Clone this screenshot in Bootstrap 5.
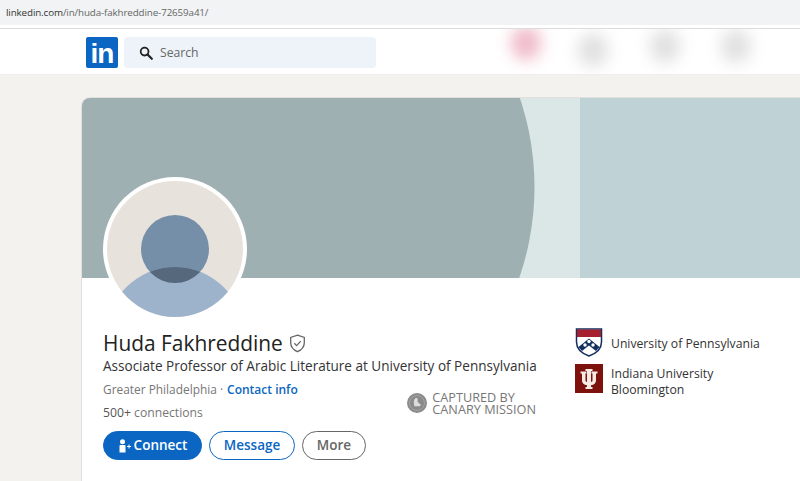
<!DOCTYPE html>
<html lang="en">
<head>
<meta charset="utf-8">
<title>Huda Fakhreddine | LinkedIn</title>
<link href="https://cdn.jsdelivr.net/npm/bootstrap@5.3.0/dist/css/bootstrap.min.css" rel="stylesheet">
<style>
html,body{height:481px;overflow:hidden}
body{background:#f4f2ee;font-family:"Open Sans","Noto Sans",sans-serif;color:#2b2b2b}
.addr-bar{height:25px;background:#f1f3f4;font-size:9.8px;letter-spacing:-.12px;padding-left:6px;color:#666;line-height:26px}
.addr-bar b{font-weight:400;color:#333}
.addr-gap{height:4px;background:#fff;border-bottom:1px solid #dcdcdc}
.top-nav{height:46px;background:#fff;padding:2px 0 0 86px;position:relative;overflow:hidden;border-bottom:1px solid #efeeea}
.li-logo{width:32px;height:31px;background:#0a66c2;border-radius:2px;color:#fff;font:700 28px/33px "Liberation Sans",sans-serif;letter-spacing:-1px;text-align:center}
.search-box{width:252px;height:31px;background:#edf3f8;border-radius:4px;margin-left:6px;padding-left:15px;font-size:12.2px;color:#666;gap:7px}
.search-box span{margin-top:2px}
.blob{position:absolute;border-radius:50%;filter:blur(8px);width:30px;height:34px;background:#e0e0e0}
.blob-a{left:511px;top:-3px;background:#efb9c7}
.blob-b{left:578px;top:4px}
.blob-c{left:650px;top:0}
.blob-d{left:721px;top:0}
.profile-card{margin:22px 0 0 81px;width:740px;height:400px;background:#fff;border:1px solid #e2e0dc;border-radius:9px;overflow:hidden;position:relative}
.banner{display:block;width:740px;height:180px}
.avatar{position:absolute;left:21px;top:79px;width:144px;height:144px}
.profile-body{padding:51px 0 0 21px;gap:39px}
.left-col{width:433px}
.person-name{font-size:20.9px;line-height:28px;color:#222;font-weight:400;margin:0;gap:6px!important}
.headline{font-size:13.55px;line-height:20px;color:#333;white-space:nowrap;margin:-1px 0 2px}
.meta-line{font-size:12.2px;line-height:23px;color:#777}
.meta-place{font-size:11.9px;margin-right:4px}
.meta-line a{color:#0a66c2;font-weight:600;text-decoration:none;font-size:12px}
.meta-line b{font-weight:400;color:#555}
.canary{font-size:12.7px;line-height:12.5px;color:#777;gap:5px;margin-top:4px}
.act-row{gap:7px;margin-top:7px}
.act-btn{height:29px;font-size:13.5px;font-weight:600;padding:0;display:flex;align-items:center;justify-content:center;border-radius:15px}
.act-connect{width:99px;background:#0a66c2;border:1px solid #0a66c2;color:#fff;gap:2px}
.act-message{width:86px;background:#fff;border:1px solid #0a66c2;color:#0a66c2}
.act-more{width:64px;background:#fff;border:1px solid #666;color:#666}
.schools{font-size:12.2px;line-height:16px;color:#333;margin-top:-1px}
.school-row{gap:8px;align-items:flex-start}
.school-row+.school-row{margin-top:7px}
.school-row span{margin-top:8px}
.school-row+.school-row span{margin-top:2px}
.school-ico{width:28px;flex:none;display:block}
</style>
</head>
<body>
<div class="addr-bar"><b>linkedin.com</b>/in/huda-fakhreddine-72659a41/</div>
<div class="addr-gap"></div>
<nav class="top-nav d-flex align-items-center">
  <div class="li-logo">in</div>
  <div class="search-box d-flex align-items-center">
    <svg width="14" height="14" viewBox="0 0 14 14" aria-hidden="true"><circle cx="5.600" cy="5.600" r="3.900" fill="none" stroke="#222" stroke-width="1.800"/><path d="M8.500 8.500l4.300 4.300" stroke="#222" stroke-width="2.200" stroke-linecap="round"/></svg>
    <span>Search</span>
  </div>
  <i class="blob blob-a"></i><i class="blob blob-b"></i><i class="blob blob-c"></i><i class="blob blob-d"></i>
</nav>
<main class="profile-card">
  <svg class="banner" viewBox="0 0 740 180" aria-hidden="true">
    <rect width="740" height="180" fill="#bfd2d6"/>
    <rect width="498" height="180" fill="#dbe6e6"/>
    <circle cx="175" cy="89" r="277.500" fill="#9fb0b3"/>
  </svg>
  <svg class="avatar" viewBox="0 0 144 144" aria-hidden="true">
    <defs><clipPath id="av"><circle cx="72" cy="72" r="68"/></clipPath><clipPath id="hd"><circle cx="72" cy="72" r="34"/></clipPath></defs>
    <circle cx="72" cy="72" r="72" fill="#fff"/>
    <g clip-path="url(#av)">
      <rect width="144" height="144" fill="#e7e2dc"/>
      <circle cx="72" cy="72" r="34" fill="#768fa9"/>
      <circle cx="72" cy="159" r="69" fill="#9db3cc"/>
      <circle cx="72" cy="159" r="69" fill="#56687b" clip-path="url(#hd)"/>
    </g>
  </svg>
  <div class="profile-body d-flex">
    <div class="left-col">
      <h1 class="person-name d-flex align-items-center">Huda Fakhreddine
        <svg width="17" height="19" viewBox="0 0 17 19" aria-hidden="true"><path d="M8.500 1.200l6.800 2.300v5.200c0 4.200-2.800 7.200-6.800 9-4-1.800-6.800-4.800-6.800-9V3.500z" fill="none" stroke="#666" stroke-width="1.300"/><path d="M5.300 9.300l2.300 2.300 4.200-4.500" fill="none" stroke="#666" stroke-width="1.300"/></svg>
      </h1>
      <div class="headline">Associate Professor of Arabic Literature at University of Pennsylvania</div>
      <div class="d-flex justify-content-between align-items-center">
        <div>
          <div class="meta-line"><span class="meta-place">Greater Philadelphia ·</span><a href="#">Contact info</a></div>
          <div class="meta-line"><b>500+</b> connections</div>
        </div>
        <div class="canary d-flex align-items-center">
          <svg width="20" height="20" viewBox="0 0 20 20" aria-hidden="true"><circle cx="10" cy="10" r="10" fill="#8b8b8b"/><circle cx="10" cy="10" r="7.500" fill="none" stroke="#a3a3a3" stroke-width="1"/><path d="M8.800 5c1.300-.4 2.200.5 2 1.800-.2 1.300-.5 2 .5 2.800l2.700 2.400-1.300 1.300H6.800c.7-.7.500-1.300.2-2.200C6.500 9 7 5.700 8.800 5z" fill="#dcdcdc"/></svg>
          <div>CAPTURED BY<br>CANARY MISSION</div>
        </div>
      </div>
      <div class="act-row d-flex">
        <button class="btn act-btn act-connect" type="button">
          <svg width="14" height="14" viewBox="0 0 14 14" aria-hidden="true"><circle cx="4.500" cy="2.800" r="2.500" fill="#fff"/><path d="M1.500 7c0-.6.500-1 1-1h4c.6 0 1 .4 1 1v6.500h-6z" fill="#fff"/><path d="M9 7.500h4M11 5.500v4" stroke="#fff" stroke-width="1"/></svg>
          Connect</button>
        <button class="btn act-btn act-message" type="button">Message</button>
        <button class="btn act-btn act-more" type="button">More</button>
      </div>
    </div>
    <div class="schools">
      <div class="school-row d-flex">
        <svg class="school-ico" height="29" viewBox="0 0 28 29" aria-hidden="true"><path d="M1.500 1h25v13c0 7-5.500 11.500-12.500 14C7 25.500 1.500 21 1.500 14z" fill="#fff" stroke="#12305e" stroke-width="1.500"/><path d="M2 1.500h24V9H2z" fill="#a51f2f"/><path d="M3.500 19L14 10.500 24.500 19 21 23 14 17.500 7 23z" fill="#12305e"/><circle cx="14" cy="13.500" r="1.700" fill="#fff"/><circle cx="10" cy="17" r="1.700" fill="#fff"/><circle cx="18" cy="17" r="1.700" fill="#fff"/></svg>
        <span>University of Pennsylvania</span>
      </div>
      <div class="school-row d-flex">
        <svg class="school-ico" height="29" viewBox="0 0 28 29" aria-hidden="true"><rect width="28" height="29" fill="#7d110c"/><path d="M10.500 5h7v2h-1.500v11c1-.2 1.500-.8 1.500-1.800V9.500H16.500V7.500h6v2h-1.500V16.500c0 2.800-2 4.300-5 4.700v1.800h1.500v2h-7v-2H12v-1.800c-3-.4-5-1.900-5-4.700V9.500H5.500v-2h6v2h-1v6.700c0 1 .5 1.600 1.500 1.800V7h-1.500z" fill="#f6ece6"/></svg>
        <span>Indiana University<br>Bloomington</span>
      </div>
    </div>
  </div>
</main>
</body>
</html>
